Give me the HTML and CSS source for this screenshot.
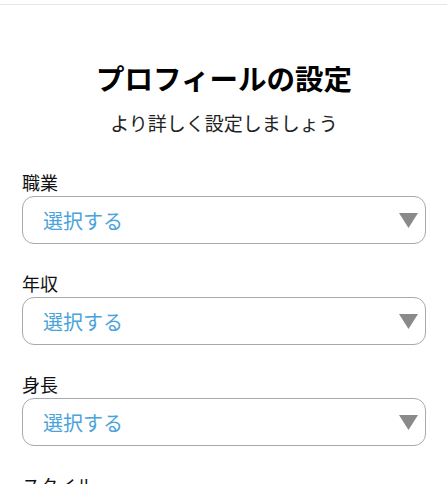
FILE: index.html
```html
<!DOCTYPE html>
<html lang="ja">
<head>
<meta charset="utf-8">
<link rel="stylesheet" href="styles.css">
</head>
<body>
<div class="topbar"></div>
<main class="page">
  <h1 class="title">プロフィールの設定</h1>
  <p class="subtitle">より詳しく設定しましょう</p>
  <div class="field">
    <div class="label">職業</div>
    <div class="select"><span class="placeholder">選択する</span><svg class="arrow" width="19" height="15" viewBox="0 0 19 15"><polygon points="0,0 19,0 9.5,15" fill="#8a8a8a"/></svg></div>
  </div>
  <div class="field">
    <div class="label">年収</div>
    <div class="select"><span class="placeholder">選択する</span><svg class="arrow" width="19" height="15" viewBox="0 0 19 15"><polygon points="0,0 19,0 9.5,15" fill="#8a8a8a"/></svg></div>
  </div>
  <div class="field">
    <div class="label">身長</div>
    <div class="select"><span class="placeholder">選択する</span><svg class="arrow" width="19" height="15" viewBox="0 0 19 15"><polygon points="0,0 19,0 9.5,15" fill="#8a8a8a"/></svg></div>
  </div>
  <div class="field">
    <div class="label">スタイル</div>
    <div class="select"><span class="placeholder">選択する</span><svg class="arrow" width="19" height="15" viewBox="0 0 19 15"><polygon points="0,0 19,0 9.5,15" fill="#8a8a8a"/></svg></div>
  </div>
</main>
</body>
</html>
```
FILE: styles.css
```css
html, body {
  margin: 0;
  padding: 0;
  background: #ffffff;
  font-family: "Noto Sans CJK JP", "Noto Sans", sans-serif;
  color: #111;
}
.topbar {
  height: 4px;
  border-bottom: 1px solid #e6e6e6;
}
.page {
  padding: 0 21px 0 22px;
}
.title {
  margin: 53px 0 0;
  font-size: 28.5px;
  line-height: 40px;
  font-weight: 700;
  text-align: center;
  color: #000;
}
.subtitle {
  margin: 11px 0 0;
  font-size: 19px;
  line-height: 28px;
  text-align: center;
  color: #222;
}
.subtitle + .field {
  margin-top: 31px;
}
.field + .field {
  margin-top: 25px;
}
.label {
  font-size: 18px;
  line-height: 28px;
  color: #111;
}
.select {
  box-sizing: border-box;
  height: 48px;
  border: 1px solid #a9a9a9;
  border-radius: 12px;
  display: flex;
  align-items: center;
  justify-content: space-between;
  padding: 0 7px 0 20px;
}
.placeholder {
  font-size: 20px;
  color: #4aa3da;
}
.arrow {
  display: block;
}
```
